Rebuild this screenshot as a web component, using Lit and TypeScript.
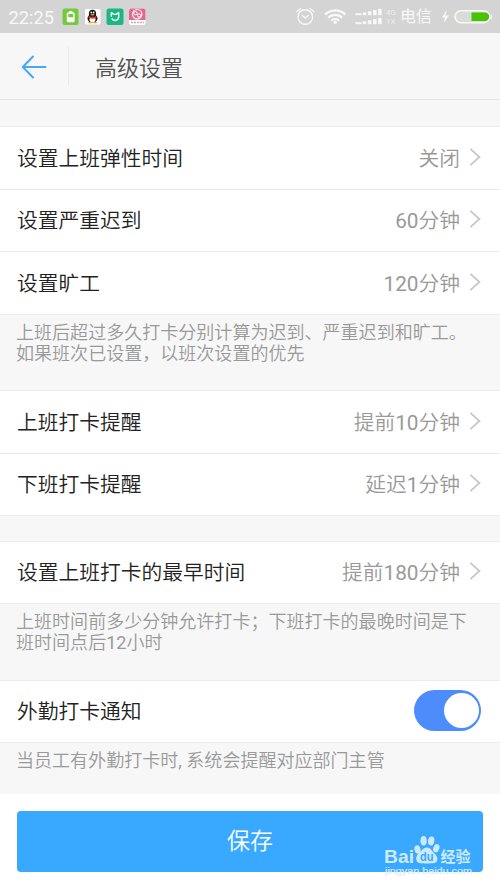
import { LitElement, html, css, svg, nothing } from "lit";
import { customElement, property } from "lit/decorators.js";

@customElement("status-bar")
class StatusBar extends LitElement {
  static styles = css`
    :host {
      display: block;
      height: 33px;
      background: #d4d4d4;
      color: #f8f8f8;
      font-family: Roboto, "Noto Sans CJK SC", sans-serif;
      font-weight: 400;
    }
    .bar {
      display: flex;
      align-items: center;
      height: 33px;
      padding: 0 8px 0 8.5px;
      box-sizing: border-box;
    }
    .bar > * { flex-shrink: 0; }
    .time {
      width: 53px;
      font-size: 18.3px;
      line-height: 33px;
      padding-top: 2px;
      box-sizing: border-box;
    }
    .apps { display: block; width: 84px; height: 33px; }
    .signals { display: block; width: 96px; height: 33px; margin-left: auto; }
    .net {
      width: 14px;
      font-size: 8px;
      line-height: 9px;
      opacity: 0.75;
      margin-top: 1px;
    }
    .carrier { width: 40px; font-size: 16px; line-height: 33px; margin-top: -1px; white-space: nowrap; }
    .power { display: block; width: 52px; height: 33px; }
  `;

  private signalBars(y: number) {
    return [2, 2.8, 4, 5.2, 6.3].map((h, i) => {
      return svg`<rect x=${i === 0 ? 355.5 : 357.7 + i * 5.1} y=${y - h} width=${i === 0 ? 5.8 : 3.5} height=${h} />`;
    });
  }

  render() {
    return html`
      <div class="bar">
        <span class="time">22:25</span>
        <svg class="apps" viewBox="61.5 0 84 33">
          <rect x="62" y="8.5" width="16" height="16.5" rx="2.5" fill="#72ca3c" />
          <rect x="66.3" y="12.5" width="7.8" height="9.8" rx="1.3" fill="#fff" />
          <rect x="68.5" y="11" width="3.4" height="2" fill="#fff" />
          <rect x="67.8" y="14" width="4.8" height="3.3" fill="#72ca3c" />
          <rect x="84.5" y="9" width="15.5" height="15.5" rx="1.5" fill="#fff" />
          <ellipse cx="92" cy="13.8" rx="3.6" ry="4" fill="#111" />
          <ellipse cx="92" cy="18.5" rx="5" ry="4.2" fill="#111" />
          <ellipse cx="92" cy="19.6" rx="3" ry="2.8" fill="#fff" />
          <path d="M88 15.8q4 2.4 8 0v1.8q-4 2.4-8 0z" fill="#e63a2e" />
          <circle cx="90.8" cy="12.5" r="0.9" fill="#fff" />
          <circle cx="93.2" cy="12.5" r="0.9" fill="#fff" />
          <ellipse cx="92" cy="14.7" rx="2.2" ry="0.8" fill="#f5a623" />
          <ellipse cx="89.6" cy="22.6" rx="2.3" ry="0.8" fill="#f5a623" />
          <ellipse cx="94.4" cy="22.6" rx="2.3" ry="0.8" fill="#f5a623" />
          <rect x="106" y="8.5" width="17" height="16.5" rx="2.5" fill="#19b783" />
          <path d="M110.8 16.8V12.6l2.600 1.800h2.200l2.600-1.800v4.200a3.700 3.700 0 0 1-7 1.600" fill="none" stroke="#fff" stroke-width="1.4" stroke-linejoin="round" />
          <rect x="128.5" y="8.5" width="16.5" height="16.5" rx="2.5" fill="#fff" />
          <path d="M131 8.5h11.5a2.5 2.5 0 0 1 2.5 2.5v9h-16.5v-9a2.5 2.5 0 0 1 2.5-2.5z" fill="#e0688c" />
          <circle cx="136.7" cy="14.2" r="4.7" fill="none" stroke="#fff" stroke-width="1.2" />
          <circle cx="135" cy="13.2" r="1.7" fill="none" stroke="#fff" />
          <circle cx="138.5" cy="15.5" r="1.6" fill="none" stroke="#fff" />
          <path d="M130.5 22.5h13" stroke="#e99ab2" stroke-width="1.3" stroke-dasharray="2 1" />
        </svg>
        <svg class="signals" viewBox="290 0 96 33">
          <g fill="none" stroke="#f8f8f8" stroke-width="1.4" stroke-linecap="round" stroke-linejoin="round">
            <circle cx="305.3" cy="17" r="7.3" />
            <path d="M302.3 15.5l3 2.5 3-2.5M297 11.5l3.5-3M310.2 8.5l3.5 3" />
          </g>
          <g fill="none" stroke="#f8f8f8" stroke-width="2.2">
            <path d="M325 14.6a14.5 14.5 0 0 1 20.4 0" />
            <path d="M328.2 17.8a10 10 0 0 1 14 0" />
            <path d="M331.3 20.6a5.7 5.7 0 0 1 7.8 0" />
          </g>
          <circle cx="335.2" cy="22.3" r="1.7" fill="#f8f8f8" />
          <g fill="#f8f8f8">${this.signalBars(15.2)}${this.signalBars(24.2)}</g>
        </svg>
        <div class="net">4G<br />1X</div>
        <span class="carrier">电信</span>
        <svg class="power" viewBox="440 0 52 33">
          <path d="M446.8 10l-5 7.5h3.3l-1.3 5.5 5.2-7.6h-3.4z" fill="#f8f8f8" />
          <rect x="455" y="10.7" width="34.5" height="12" rx="6" fill="#d9dcd7" stroke="#f8f8f8" stroke-width="1.6" />
          <path d="M471.5 12.5h13.5a4.2 4.2 0 0 1 0 8.4h-13.5z" fill="#46c400" />
          <path d="M491 14.5v4.5" stroke="#f8f8f8" stroke-width="1.5" />
        </svg>
      </div>
    `;
  }
}

@customElement("setting-row")
class SettingRow extends LitElement {
  @property() label = "";
  @property() value = "";
  @property({ type: Boolean }) toggle = false;

  static styles = css`
    :host { display: block; background: #fff; }
    .row {
      display: flex;
      align-items: center;
      height: 62.4px;
      box-sizing: border-box;
      padding: 0 19px 0 17px;
      border-bottom: 1px solid #ececec;
    }
    .label { font-size: 20.75px; color: #222; flex: 1; padding-bottom: 2px; }
    .value { font-size: 20.75px; color: #999; padding-bottom: 2px; }
    .number { font-weight: 400; }
    .chevron { display: block; width: 12px; height: 20px; margin: -2px 0 0 9px; }
    .switch {
      display: flex;
      justify-content: flex-end;
      width: 67px;
      height: 41px;
      border-radius: 21px;
      background: #4c8cfc;
      box-sizing: border-box;
      padding: 3px 2.5px;
      margin-top: -1px;
    }
    .knob { width: 35px; height: 35px; border-radius: 50%; background: #fff; }
  `;

  private get valueParts() {
    return this.value
      .split(/(\d+)/)
      .filter((part) => part)
      .map((part) => (/\d/.test(part) ? html`<span class="number">${part}</span>` : part));
  }

  render() {
    return html`
      <div class="row">
        <span class="label">${this.label}</span>
        ${this.value
          ? html`<span class="value">${this.valueParts}</span>
              <svg class="chevron" viewBox="0 0 12 20">
                <path d="M1.3 1.8L10.5 10 1.3 18.2" fill="none" stroke="#c6c6c6" stroke-width="1.7" />
              </svg>`
          : nothing}
        ${this.toggle ? html`<span class="switch"><span class="knob"></span></span>` : nothing}
      </div>
    `;
  }
}

@customElement("app-root")
class AppRoot extends LitElement {
  static styles = css`
    :host {
      display: flex;
      flex-direction: column;
      width: 500px;
      height: 889px;
      overflow: hidden;
      background: #f7f7f7;
      font-family: Roboto, "Noto Sans CJK SC", sans-serif;
      font-weight: 350;
    }
    .header {
      display: flex;
      align-items: center;
      height: 67px;
      box-sizing: border-box;
      border-bottom: 1px solid #e6e6e6;
      padding-left: 21px;
    }
    .back { display: block; width: 26px; height: 24px; margin-top: 2px; }
    .rule { width: 1px; height: 38px; background: #ebebeb; margin: 0 26px 0 21px; }
    .title { font-size: 22px; color: #505050; padding-bottom: 1px; }
    .group { border-top: 1px solid #ececec; box-sizing: border-box; }
    .gap-top { height: 26.4px; }
    .gap { height: 24.5px; }
    .note {
      box-sizing: border-box;
      padding: 7.5px 16px 0;
      font-size: 18.05px;
      line-height: 21px;
      color: #999;
      white-space: nowrap;
    }
    .number { font-weight: 400; }
    .tall { height: 75.7px; }
    .short { height: 51px; padding-top: 7px; }
    .footer {
      position: relative;
      flex: 1;
      background: #fff;
      padding: 17px 17px 0;
    }
    .save {
      display: block;
      width: 100%;
      height: 61px;
      padding: 0 0 5px;
      border: 0;
      border-radius: 4px;
      background: #38a9ff;
      color: #fff;
      font: 350 23px Roboto, "Noto Sans CJK SC", sans-serif;
    }
    .watermark {
      position: absolute;
      left: 382px;
      top: 40px;
      width: 96px;
      height: 46px;
      font-family: "Liberation Sans", "Noto Sans CJK SC", sans-serif;
    }
  `;

  render() {
    return html`
      <status-bar></status-bar>
      <div class="header">
        <svg class="back" viewBox="0 0 26 24">
          <path d="M12 1.5L1.8 12 12 22.5M1.8 12H24.5" fill="none" stroke="#44a9fa" stroke-width="2" stroke-linecap="round" stroke-linejoin="round" />
        </svg>
        <span class="rule"></span>
        <span class="title">高级设置</span>
      </div>
      <div class="gap-top"></div>
      <div class="group">
        <setting-row label="设置上班弹性时间" value="关闭"></setting-row>
        <setting-row label="设置严重迟到" value="60分钟"></setting-row>
        <setting-row label="设置旷工" value="120分钟"></setting-row>
      </div>
      <div class="note tall">上班后超过多久打卡分别计算为迟到、严重迟到和旷工。<br />如果班次已设置，以班次设置的优先</div>
      <div class="group">
        <setting-row label="上班打卡提醒" value="提前10分钟"></setting-row>
        <setting-row label="下班打卡提醒" value="延迟1分钟"></setting-row>
      </div>
      <div class="gap"></div>
      <div class="group">
        <setting-row label="设置上班打卡的最早时间" value="提前180分钟"></setting-row>
      </div>
      <div class="note tall">上班时间前多少分钟允许打卡；下班打卡的最晚时间是下<br />班时间点后<span class="number">12</span>小时</div>
      <div class="group">
        <setting-row label="外勤打卡通知" toggle></setting-row>
      </div>
      <div class="note short">当员工有外勤打卡时<span class="number">, </span>系统会提醒对应部门主管</div>
      <div class="footer">
        <button class="save">保存</button>
        <svg class="watermark" viewBox="382 834 96 46">
          <defs>
            <linearGradient id="site" gradientUnits="userSpaceOnUse" x1="0" y1="864" x2="0" y2="880">
              <stop offset="0.5" stop-color="#d3ecff" />
              <stop offset="0.5" stop-color="#e9e9e9" />
            </linearGradient>
          </defs>
          <g fill="#cde9ff">
            <text x="384" y="862.5" font-size="19" font-weight="700" textLength="30" lengthAdjust="spacingAndGlyphs">Bai</text>
            <ellipse cx="417.5" cy="849.5" rx="3" ry="4.2" transform="rotate(-15 417.5 849.5)" />
            <ellipse cx="423.6" cy="840.7" rx="3.1" ry="4.7" />
            <ellipse cx="431.2" cy="840.9" rx="3.1" ry="4.5" transform="rotate(10 431.2 840.9)" />
            <ellipse cx="436.3" cy="848.2" rx="3" ry="4.2" transform="rotate(20 436.3 848.2)" />
            <path d="M427 847.5c4 0 4.5 3.5 7 5.5 5 4 4.5 10-1 10.3-3 .2-9 .2-12 0-5.5-.3-6.5-6.3-2-10.3 3-2.3 4-5.5 8-5.5z" />
            <text x="440.5" y="861.5" font-size="15" font-weight="700" textLength="30" lengthAdjust="spacingAndGlyphs">经验</text>
          </g>
          <text x="420" y="861" font-size="12" font-weight="700" fill="#38a9ff" textLength="13.5" lengthAdjust="spacingAndGlyphs">du</text>
          <text x="385" y="874" font-size="9.5" fill="url(#site)" stroke="url(#site)" stroke-width="0.2" textLength="87" lengthAdjust="spacingAndGlyphs">jingyan.baidu.com</text>
        </svg>
      </div>
    `;
  }
}
